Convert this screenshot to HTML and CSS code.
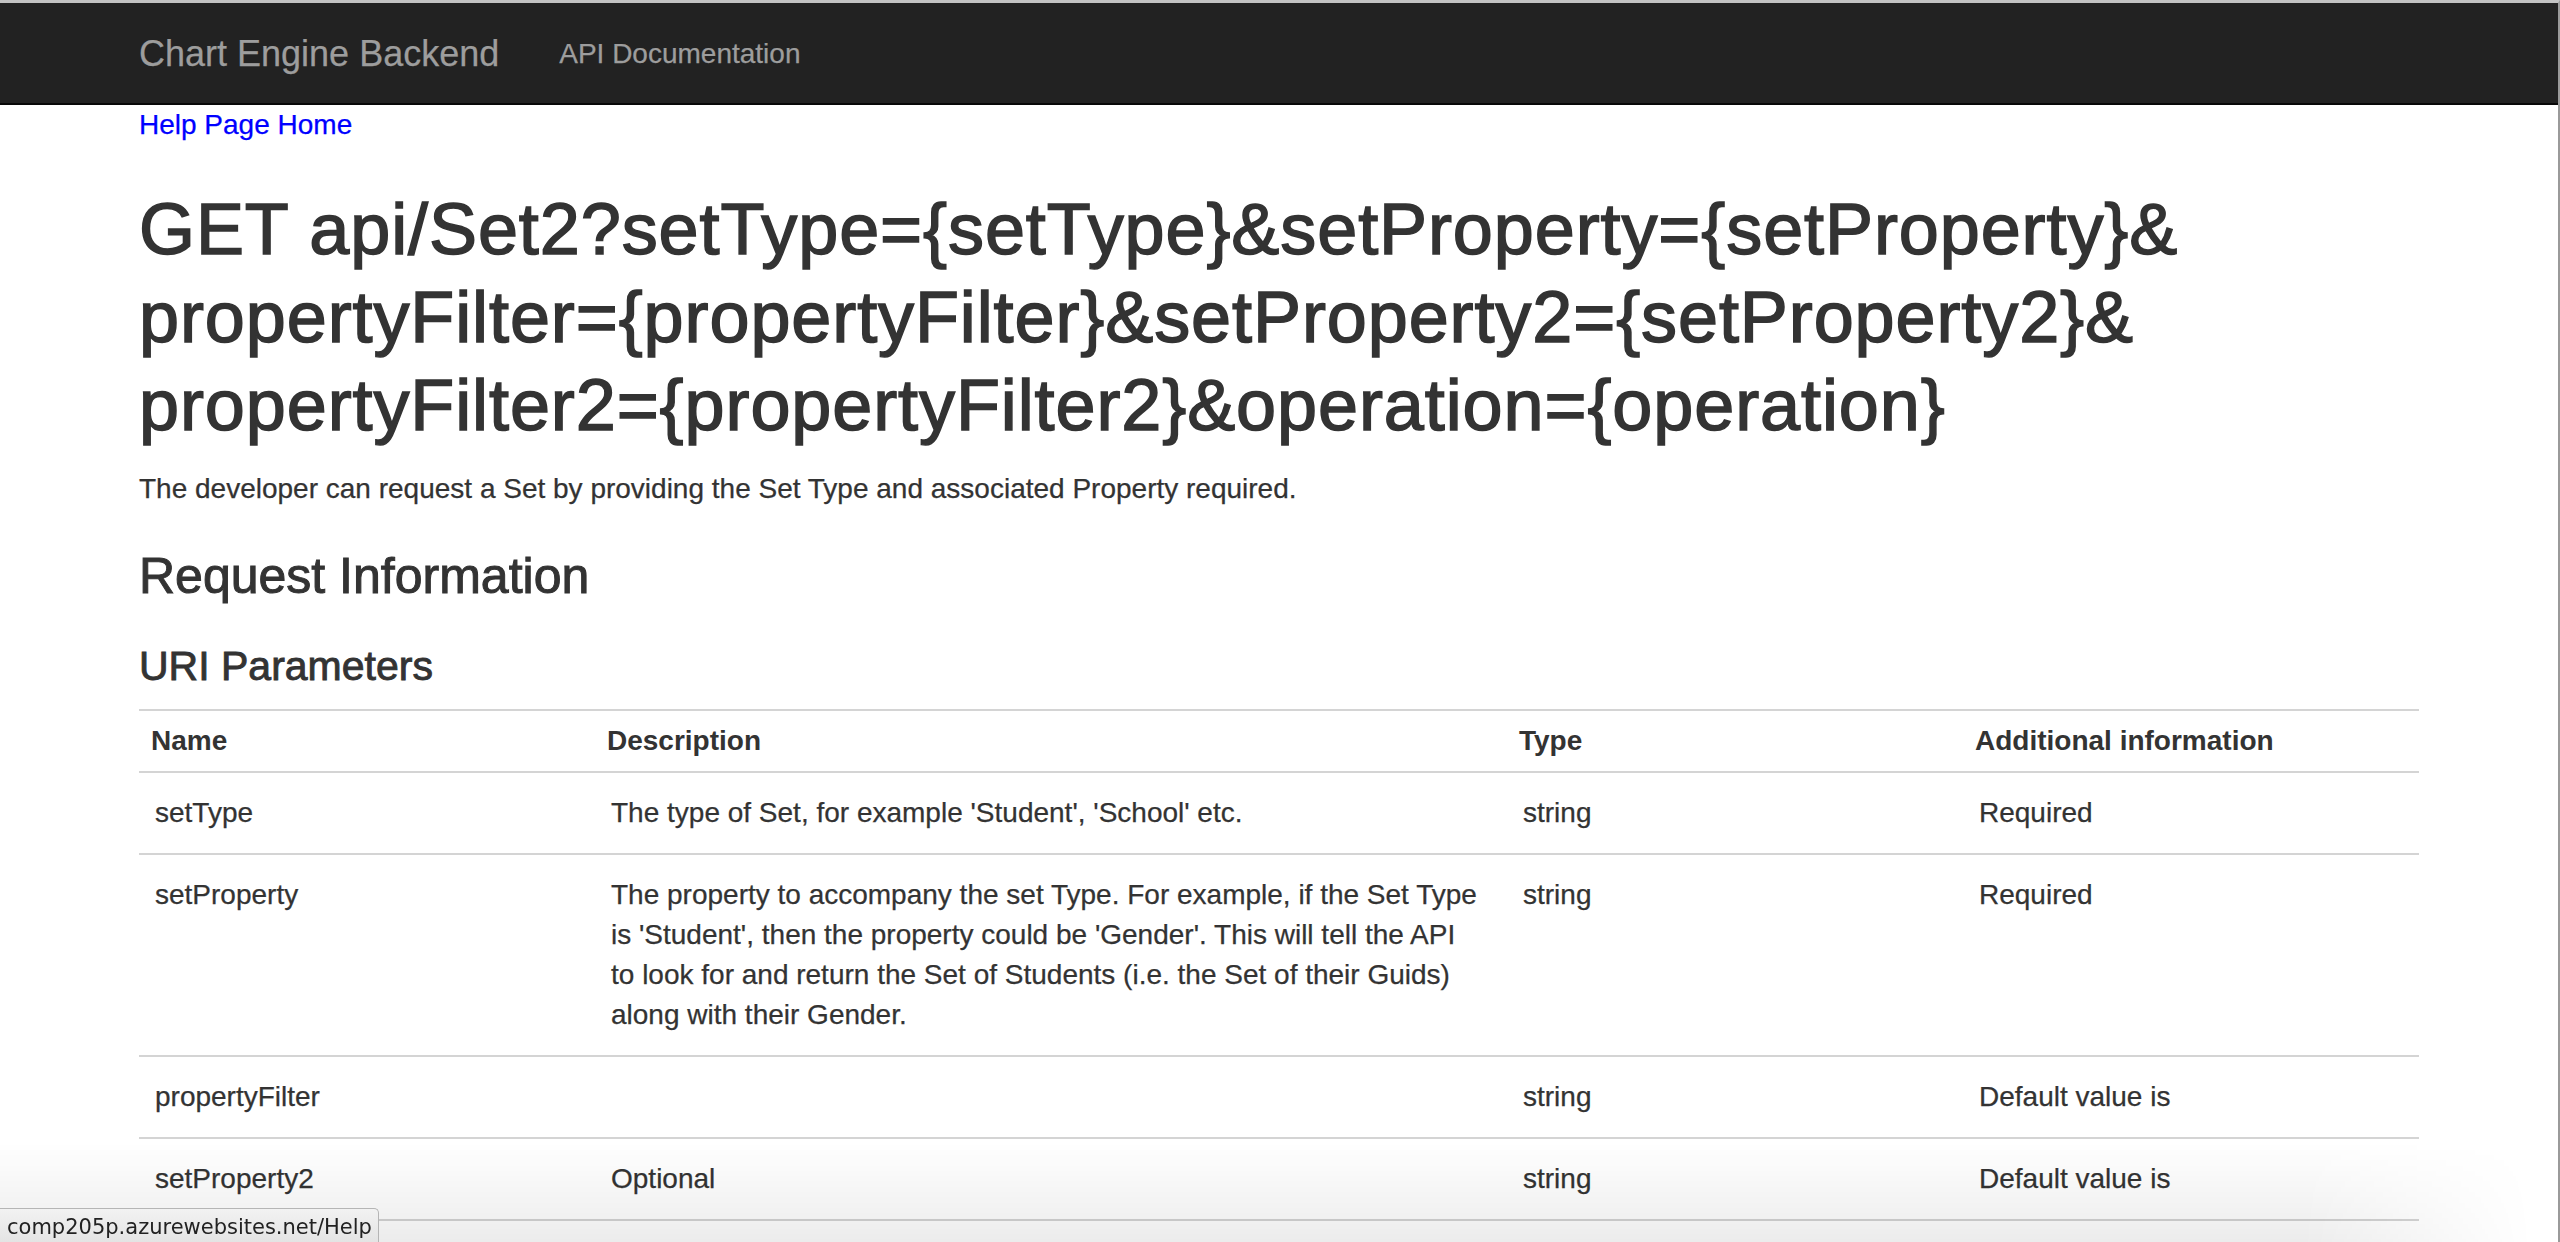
FILE: index.html
```html
<!DOCTYPE html>
<html lang="en">
<head>
<meta charset="utf-8">
<title>GET api/Set2 - Chart Engine Backend</title>
<link rel="stylesheet" href="styles.css">
</head>
<body>
<header class="navbar">
  <div class="container nav-inner">
    <a class="brand" href="#">Chart Engine Backend</a>
    <ul class="nav-links">
      <li><a href="#">API Documentation</a></li>
    </ul>
  </div>
</header>
<main class="container help-page">
  <p class="home-link"><a href="#">Help Page Home</a></p>
  <h1>GET api/Set2?setType={setType}&amp;setProperty={setProperty}&amp;<br>propertyFilter={propertyFilter}&amp;setProperty2={setProperty2}&amp;<br>propertyFilter2={propertyFilter2}&amp;operation={operation}</h1>
  <p class="summary">The developer can request a Set by providing the Set Type and associated Property required.</p>
  <h2>Request Information</h2>
  <h3>URI Parameters</h3>
  <table class="help-page-table">
    <colgroup>
      <col class="col-narrow">
      <col class="col-wide">
      <col class="col-narrow">
      <col class="col-narrow">
    </colgroup>
    <thead>
      <tr><th>Name</th><th>Description</th><th>Type</th><th>Additional information</th></tr>
    </thead>
    <tbody>
      <tr><td>setType</td><td>The type of Set, for example 'Student', 'School' etc.</td><td>string</td><td>Required</td></tr>
      <tr><td>setProperty</td><td>The property to accompany the set Type. For example, if the Set Type is 'Student', then the property could be 'Gender'. This will tell the API<br>to look for and return the Set of Students (i.e. the Set of their Guids) along with their Gender.</td><td>string</td><td>Required</td></tr>
      <tr><td>propertyFilter</td><td></td><td>string</td><td>Default value is</td></tr>
      <tr><td>setProperty2</td><td>Optional</td><td>string</td><td>Default value is</td></tr>
    </tbody>
  </table>
</main>
<div class="bottom-shade"></div>
<div class="statusbar">comp205p.azurewebsites.net/Help</div>
</body>
</html>
```
FILE: styles.css
```css
html {
  scrollbar-width: none;
}
html::-webkit-scrollbar {
  display: none;
}
* {
  box-sizing: border-box;
}
body {
  margin: 0;
  min-height: 1242px;
  font-family: "Liberation Sans", Arial, Helvetica, sans-serif;
  font-size: 28px;
  line-height: 40px;
  color: #333;
  background: #fff;
  border-top: 3px solid #c3c3c3;
  border-right: 2px solid #9a9a9a;
  -webkit-text-stroke: 0.25px currentColor;
}
a {
  color: #0000ff;
  text-decoration: none;
}
.container {
  width: 2340px;
  margin: 0 auto;
  padding: 0 30px;
}

/* navbar */
.navbar {
  height: 102px;
  background: #222;
  border-bottom: 2px solid #080808;
}
.nav-inner {
  display: flex;
  align-items: flex-start;
}
.brand {
  display: block;
  height: 100px;
  margin-left: -30px;
  padding: 31px 30px 29px;
  font-size: 36px;
  line-height: 40px;
  color: #9d9d9d;
}
.nav-links {
  display: flex;
  list-style: none;
  margin: 0;
  padding: 0;
}
.nav-links a {
  display: block;
  padding: 31px 30px 29px;
  line-height: 40px;
  color: #9d9d9d;
}

/* content */
.home-link {
  margin: 0 0 20px;
}
h1, h2, h3 {
  font-weight: normal;
  color: #333;
}
h1 {
  font-size: 72px;
  line-height: 88px;
  letter-spacing: 0.9px;
  margin: 40px 0 20px;
  -webkit-text-stroke: 1.5px currentColor;
}
h2 {
  font-size: 50px;
  line-height: 55px;
  margin: 40px 0 20px;
  -webkit-text-stroke: 1px currentColor;
}
h3 {
  font-size: 41px;
  line-height: 45px;
  margin: 40px 0 20px;
  -webkit-text-stroke: 0.9px currentColor;
}
.summary {
  margin: 0 0 20px;
}

/* table */
.help-page-table {
  width: 100%;
  table-layout: fixed;
  border-collapse: collapse;
  border-top: 2px solid #d4d4d4;
  margin: 0 0 40px;
  text-align: left;
}
.col-narrow {
  width: 20%;
}
.col-wide {
  width: 40%;
}
.help-page-table th {
  font-weight: bold;
  text-align: left;
  padding: 10px 12px;
  border-bottom: 2px solid #d4d4d4;
  -webkit-text-stroke: 0;
}
.help-page-table td {
  padding: 20px 16px;
  border-bottom: 2px solid #d4d4d4;
  vertical-align: top;
}

/* overlays */
.bottom-shade {
  position: fixed;
  left: 0;
  right: 2px;
  bottom: 0;
  height: 100px;
  pointer-events: none;
  background: linear-gradient(to bottom, rgba(0, 0, 0, 0), rgba(0, 0, 0, 0.075));
  -webkit-mask-image: linear-gradient(to right, #000 90%, transparent 99%);
  mask-image: linear-gradient(to right, #000 90%, transparent 99%);
}
.statusbar {
  position: fixed;
  left: 0;
  bottom: 0;
  width: 379px;
  height: 34px;
  padding: 4px 0 0 7px;
  font-family: "DejaVu Sans", "Liberation Sans", sans-serif;
  font-size: 21px;
  line-height: 29px;
  color: #222;
  white-space: nowrap;
  -webkit-text-stroke: 0;
  background: linear-gradient(#f2f2f2, #e4e4e4);
  border-top: 1px solid #b5b5b5;
  border-right: 1px solid #b5b5b5;
  border-top-right-radius: 5px;
}
```
